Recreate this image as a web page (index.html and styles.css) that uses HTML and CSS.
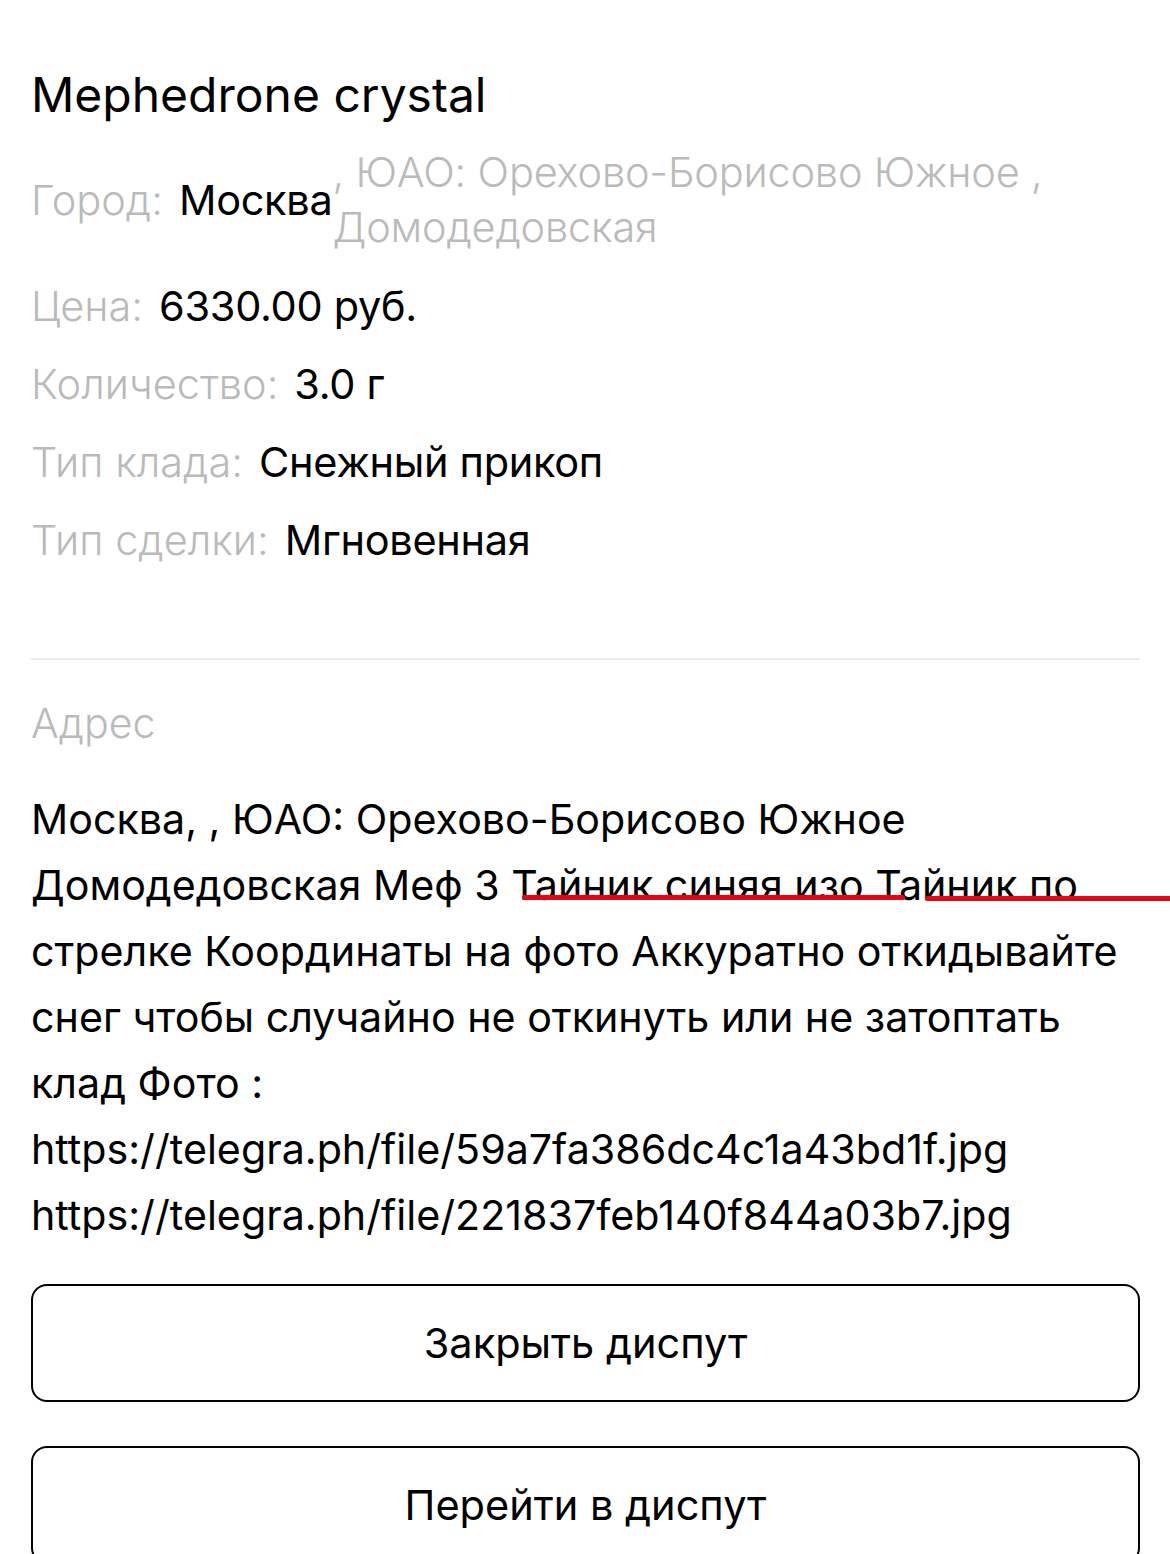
FILE: index.html
```html
<!DOCTYPE html>
<html lang="ru">
<head>
  <meta charset="UTF-8">
  <meta name="viewport" content="width=device-width, initial-scale=1.0">
  <title>Диспут</title>
  <link rel="stylesheet" href="styles.css">
</head>
<body>
  <main class="page">
    <h1 class="title">Mephedrone crystal</h1>

    <div class="details">
      <div class="row">
        <span class="label">Город:</span>
        <span class="value">Москва</span>
        <span class="extra">, ЮАО: Орехово-Борисово Южное , Домодедовская</span>
      </div>
      <div class="row">
        <span class="label">Цена:</span>
        <span class="value">6330.00 руб.</span>
      </div>
      <div class="row">
        <span class="label">Количество:</span>
        <span class="value">3.0 г</span>
      </div>
      <div class="row">
        <span class="label">Тип клада:</span>
        <span class="value">Снежный прикоп</span>
      </div>
      <div class="row">
        <span class="label">Тип сделки:</span>
        <span class="value">Мгновенная</span>
      </div>
    </div>

    <hr class="divider">

    <section class="address">
      <div class="label">Адрес</div>
      <p class="address-text">Москва, , ЮАО: Орехово-Борисово Южное Домодедовская Меф 3 Тайник синяя изо Тайник по стрелке Координаты на фото Аккуратно откидывайте снег чтобы случайно не откинуть или не затоптать клад Фото : https://telegra.ph/file/59a7fa386dc4c1a43bd1f.jpg https://telegra.ph/file/221837feb140f844a03b7.jpg</p>
      <span class="scribble scribble-one"></span>
      <span class="scribble scribble-two"></span>
    </section>

    <div class="actions">
      <button type="button" class="btn">Закрыть диспут</button>
      <button type="button" class="btn">Перейти в диспут</button>
    </div>
  </main>
</body>
</html>
```

FILE: styles.css
```css
* {
  box-sizing: border-box;
}
body {
  margin: 0;
  background: #fff;
  color: #000;
  font-family: Inter, "Noto Sans", sans-serif;
  overflow: hidden;
}
.page {
  padding: 67px 30px 0 31px;
}
.title {
  margin: 0;
  font-size: 48px;
  font-weight: 400;
  line-height: 56px;
}
.details {
  display: flex;
  flex-direction: column;
  gap: 24px;
  margin-top: 22px;
  font-size: 41.5px;
  line-height: 54px;
}
.row {
  display: flex;
  align-items: center;
  gap: 16px;
}
.label {
  color: #bababa;
  font-weight: 300;
}
.value {
  font-weight: 400;
  letter-spacing: -0.3px;
}
.extra {
  color: #bababa;
  font-weight: 300;
  line-height: 55px;
  margin-left: -16px;
  letter-spacing: -0.2px;
}
.divider {
  margin: 91px 0 0;
  border: none;
  height: 2px;
  background: #ebebeb;
}
.address {
  position: relative;
  margin-top: 36px;
  font-size: 41.2px;
}
.address .label {
  line-height: 54px;
}
.address-text {
  margin: 36px 0 0;
  line-height: 66px;
}
.scribble {
  position: absolute;
  height: 5px;
  background: #e30613;
  border-radius: 3px;
}
.scribble-one {
  left: 491px;
  width: 383px;
  top: 199px;
}
.scribble-two {
  left: 894px;
  width: 260px;
  top: 200px;
}
.actions {
  display: flex;
  flex-direction: column;
  gap: 44px;
  margin-top: 36px;
}
.btn {
  height: 118px;
  width: 100%;
  background: #fff;
  border: 2px solid #000;
  border-radius: 16px;
  font-family: inherit;
  font-size: 41.5px;
  color: #000;
}
```
